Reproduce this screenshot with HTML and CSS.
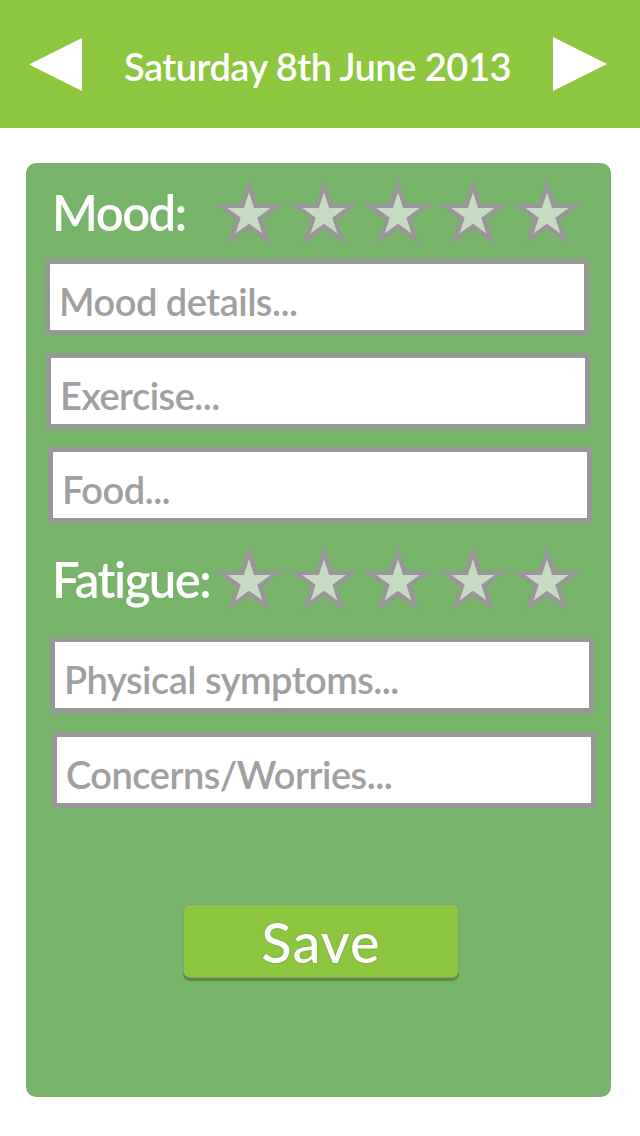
FILE: index.html
```html
<!DOCTYPE html>
<html lang="en">
<head>
  <meta charset="UTF-8" />
  <meta name="viewport" content="width=device-width, initial-scale=1.0"/>
  <title>Diary</title>
  <link rel="stylesheet" href="styles.css">
</head>
<body>

  <div class="topbar">
    <button class="arrow" aria-label="Previous day">
      <svg width="53" height="53" viewBox="0 0 53 53"><polygon points="0,26.5 53,0 53,53" fill="#fff"/></svg>
    </button>
    <h1 class="date">Saturday 8th June 2013</h1>
    <button class="arrow" aria-label="Next day">
      <svg width="54" height="54" viewBox="0 0 54 54"><polygon points="0,0 54,27 0,54" fill="#fff"/></svg>
    </button>
  </div>

  <div class="card">
    <div class="rating-row">
      <span class="rating-label">Mood:</span>
      <div class="stars" id="mood-stars"></div>
    </div>
    <input type="text" class="field" placeholder="Mood details...">
    <input type="text" class="field shift-1" placeholder="Exercise...">
    <input type="text" class="field shift-3" placeholder="Food...">

    <div class="rating-row fatigue">
      <span class="rating-label">Fatigue:</span>
      <div class="stars" id="fatigue-stars"></div>
    </div>
    <input type="text" class="field shift-5" placeholder="Physical symptoms...">
    <input type="text" class="field shift-7 last" placeholder="Concerns/Worries...">

    <button class="save">Save</button>
  </div>

  <script>
    // 5 empty stars per rating
    const star = '<svg class="star" width="70" height="67" viewBox="0 0 70 67">' +
      '<polygon points="35,7 41.76,27.7 63.53,27.73 45.94,40.55 52.63,61.27 35,48.5 17.37,61.27 24.06,40.55 6.47,27.73 28.24,27.7" ' +
      'fill="#c6dbc2" stroke="#979797" stroke-width="4.5" stroke-linejoin="miter" stroke-miterlimit="10"/></svg>';
    document.querySelectorAll('.stars').forEach(function(el) {
      el.innerHTML = star.repeat(5);
    });
  </script>

</body>
</html>
```

FILE: styles.css
```css
body {
  margin: 0;
  padding: 0;
  background: #fff;
  font-family: 'Lato', sans-serif;
}
.topbar {
  height: 128px;
  background: #8dc63f;
  display: flex;
  align-items: center;
  justify-content: space-between;
  padding: 0 33px 0 29px;
  box-sizing: border-box;
}
.arrow {
  background: none;
  border: none;
  padding: 0;
  display: flex;
  cursor: pointer;
}
.date {
  margin: 3px 0 0 0;
  color: #fff;
  font-size: 38px;
  font-weight: 600;
  letter-spacing: -0.5px;
}
.card {
  margin: 35px 29px 39px 26px;
  height: 934px;
  box-sizing: border-box;
  background: #77b46a;
  border-radius: 10px;
  padding: 15px 16px 0 19px;
  display: flex;
  flex-direction: column;
}
.rating-row {
  display: flex;
  align-items: center;
  height: 67px;
  padding-left: 7px;
  margin-bottom: 14px;
}
.rating-row.fatigue {
  margin-top: 4px;
  margin-bottom: 25px;
}
.rating-label {
  width: 162px;
  color: #fff;
  font-size: 49px;
  font-weight: 600;
  letter-spacing: -1.5px;
}
.stars {
  display: flex;
  gap: 4.5px;
}
.star {
  display: block;
}
.field {
  width: 544px;
  height: 76px;
  box-sizing: border-box;
  border: 5px solid #979797;
  background: #fff;
  padding: 8px 10px 0 9px;
  margin: 0 0 18px 0;
  font-family: 'Lato', sans-serif;
  font-size: 38px;
  font-weight: 600;
  letter-spacing: -0.5px;
  color: #555;
  outline: none;
  border-radius: 0;
}
.field::placeholder {
  color: #a0a0a0;
}
.field.shift-1 { margin-left: 1px; }
.field.shift-3 { margin-left: 3px; }
.field.shift-5 { margin-left: 5px; margin-bottom: 19px; }
.field.shift-7 { margin-left: 7px; }
.field.last {
  margin-bottom: 96px;
}
.save {
  align-self: center;
  width: 276px;
  height: 74px;
  margin-left: 2px;
  background: #8cc63f;
  border: 1px solid #8e9a84;
  border-radius: 7px;
  box-shadow: 0 3px 1px #5d8a34;
  color: #fff;
  font-family: 'Lato', sans-serif;
  font-size: 56px;
  font-weight: 500;
  letter-spacing: 1px;
  text-shadow: 0 0 2px rgba(0, 0, 0, 0.25);
  cursor: pointer;
  padding: 0;
}
```
